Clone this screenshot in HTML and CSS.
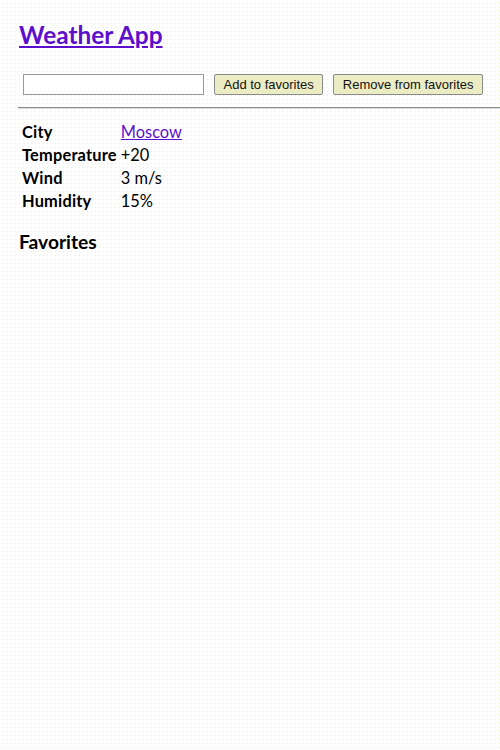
FILE: index.html
```html
<!DOCTYPE html>
<html>
<head>
<meta charset="utf-8">
<title>Weather App</title>
<link rel="stylesheet" href="styles.css">
</head>
<body>
<div class="app">
  <h1 class="title"><a href="#">Weather App</a></h1>
  <div class="controls">
    <input class="city-input" type="text">
    <button class="btn">Add to favorites</button>
    <button class="btn">Remove from favorites</button>
  </div>
  <hr class="divider">
  <table class="weather">
    <tr><th>City</th><td><a href="#">Moscow</a></td></tr>
    <tr><th>Temperature</th><td>+20</td></tr>
    <tr><th>Wind</th><td>3 m/s</td></tr>
    <tr><th>Humidity</th><td>15%</td></tr>
  </table>
  <h2 class="favorites">Favorites</h2>
</div>
</body>
</html>
```
FILE: styles.css
```css
html, body {
  margin: 0;
  padding: 0;
  min-height: 100%;
}
body {
  background-color: #ffffff;
  background-image:
    linear-gradient(90deg, #ffffff 3px, transparent 3px),
    linear-gradient(#ffffff 3px, #ffff50 3px);
  background-size: 4px 4px;
  font-family: Lato, "Noto Sans", sans-serif;
  color: #000;
  width: 500px;
  height: 750px;
  overflow: hidden;
}
.app {
  padding-left: 18px;
}
a {
  color: #5c10cc;
}
.title {
  margin: 21px 0 0 1px;
  font-size: 24.4px;
  line-height: 28px;
  font-weight: 700;
}
.controls {
  display: flex;
  align-items: center;
  gap: 10px;
  margin: 25px 0 0 5px;
}
.city-input {
  box-sizing: border-box;
  width: 181px;
  height: 21px;
  margin: 0;
  border: 1px solid #9a9a9a;
  background: #ffffff;
  padding: 1px 3px;
}
.btn {
  box-sizing: border-box;
  height: 21px;
  margin: 0;
  padding: 0 8.5px;
  font-family: "Liberation Sans", Arial, sans-serif;
  font-size: 13px;
  color: #111;
  background: #ececc4;
  border: 1px solid #8a8a8a;
  border-radius: 2px;
}
.divider {
  margin: 12px 0 0 0;
  height: 0;
  border: 0;
  border-top: 1px solid #8c8c8c;
  border-bottom: 1px solid #dcdce4;
}
.weather {
  margin: 10px 0 0 1px;
  font-size: 16.4px;
  border-spacing: 2px;
}
.weather th, .weather td {
  padding: 1px;
  text-align: left;
  line-height: 19px;
}
.weather th {
  font-weight: 700;
  letter-spacing: 0.2px;
}
.weather td {
  font-weight: 400;
}
.favorites {
  margin: 17px 0 0 1px;
  font-size: 19.2px;
  font-weight: 700;
}
```
